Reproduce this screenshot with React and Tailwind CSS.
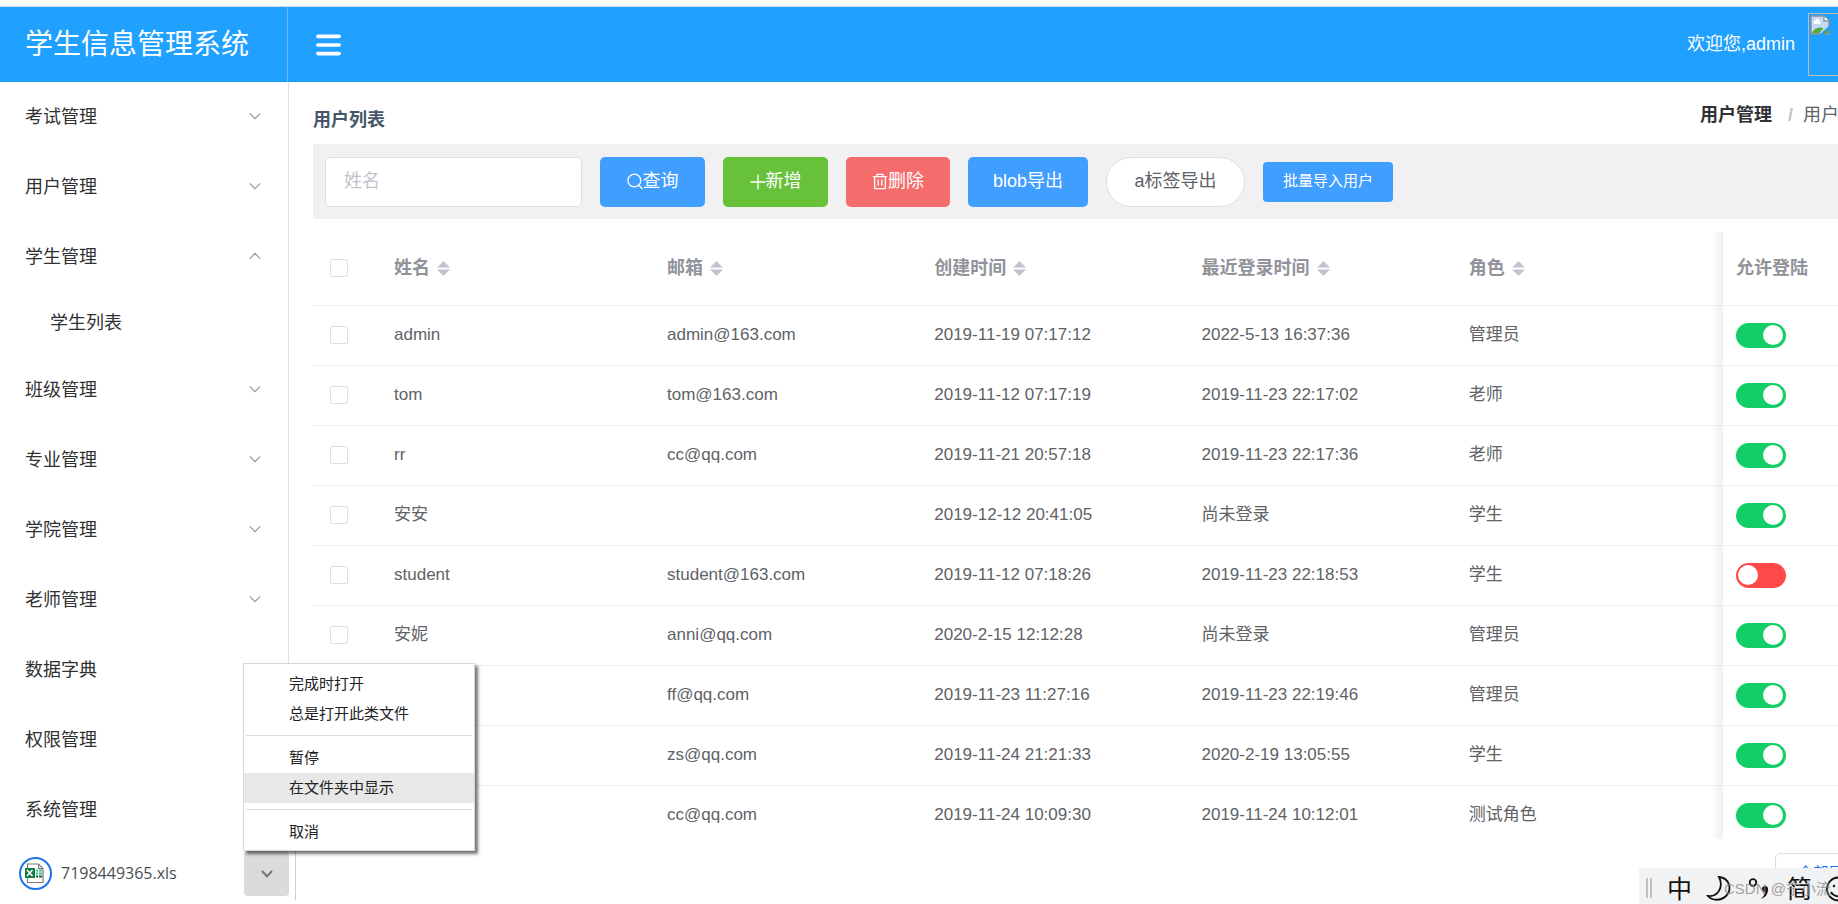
import React from "react";

const MENU = [
  { label: "考试管理", arrow: "down" },
  { label: "用户管理", arrow: "down" },
  { label: "学生管理", arrow: "up", children: ["学生列表"] },
  { label: "班级管理", arrow: "down" },
  { label: "专业管理", arrow: "down" },
  { label: "学院管理", arrow: "down" },
  { label: "老师管理", arrow: "down" },
  { label: "数据字典" },
  { label: "权限管理" },
  { label: "系统管理" },
];

const ROWS = [
  ["admin", "admin@163.com", "2019-11-19 07:17:12", "2022-5-13 16:37:36", "管理员", true],
  ["tom", "tom@163.com", "2019-11-12 07:17:19", "2019-11-23 22:17:02", "老师", true],
  ["rr", "cc@qq.com", "2019-11-21 20:57:18", "2019-11-23 22:17:36", "老师", true],
  ["安安", "", "2019-12-12 20:41:05", "尚未登录", "学生", true],
  ["student", "student@163.com", "2019-11-12 07:18:26", "2019-11-23 22:18:53", "学生", false],
  ["安妮", "anni@qq.com", "2020-2-15 12:12:28", "尚未登录", "管理员", true],
  ["ff", "ff@qq.com", "2019-11-23 11:27:16", "2019-11-23 22:19:46", "管理员", true],
  ["zs", "zs@qq.com", "2019-11-24 21:21:33", "2020-2-19 13:05:55", "学生", true],
  ["cc", "cc@qq.com", "2019-11-24 10:09:30", "2019-11-24 10:12:01", "测试角色", true],
];

const COLUMNS = ["姓名", "邮箱", "创建时间", "最近登录时间", "角色"];

function Chevron({ up }) {
  return (
    <svg width="12" height="10" viewBox="0 0 12 10" fill="none" stroke="#909399" strokeWidth="1.1" className="shrink-0">
      <path d={up ? "M0.8 6.6 L6 1.4 L11.2 6.6" : "M0.8 1.4 L6 6.6 L11.2 1.4"} />
    </svg>
  );
}

function Header() {
  return (
    <header className="flex h-[76px] shrink-0 items-stretch border-t border-[#d5dbe0] bg-[#20a0ff] text-white">
      <h1 className="flex w-[288px] shrink-0 items-center border-r border-[#5fb9fb] pl-[25px] text-[28px]">学生信息管理系统</h1>
      <button type="button" aria-label="菜单" className="ml-[28px]">
        <svg width="25" height="22" viewBox="0 0 25 22" fill="none" stroke="#fff" strokeWidth="3.6" strokeLinecap="round">
          <path d="M1.9 2.4H23.1M1.9 11H23.1M1.9 19.6H23.1" />
        </svg>
      </button>
      <div className="ml-auto mr-[30px] flex items-center gap-[13px]">
        <span className="text-[18px]">欢迎您,admin</span>
        <span className="h-[63px] w-[62px] border border-[#b9bec2] p-px">
          <svg width="20" height="20" viewBox="0 0 20 20">
            <path d="M1 1H14L19 6V19H1Z" fill="#c6d8f3" stroke="#8d9299" strokeWidth="1.4" />
            <path d="M4 9a2 2 0 0 1 1-3.4A2.4 2.4 0 0 1 9.6 6 1.8 1.8 0 0 1 10 9Z" fill="#fff" />
            <path d="M1.7 18.3C4.5 13 8.5 11 13.5 13.5L9 18.3Z" fill="#52a838" />
            <path d="M14 1V6H19" fill="#fff" stroke="#8d9299" strokeWidth="1.4" />
            <path d="M20 10V14L14 19.8H9Z" fill="#20a0ff" />
            <path d="M13 18.6L18.6 14V18.6Z" fill="#52a838" />
          </svg>
        </span>
      </div>
    </header>
  );
}

function Sidebar() {
  return (
    <aside className="w-[289px] shrink-0 border-r border-[#e0e0e3]">
      <nav>
        <ul>
          {MENU.map((item) => (
            <li key={item.label}>
              <a href="#" className="flex h-[70px] items-center justify-between pl-[25px] pr-[27px] text-[18px] text-[#303133]">
                {item.label}
                {item.arrow && <Chevron up={item.arrow === "up"} />}
              </a>
              {item.children && (
                <ul>
                  {item.children.map((c) => (
                    <li key={c}>
                      <a href="#" className="flex h-[63px] items-center pl-[50px] text-[18px] text-[#303133]">{c}</a>
                    </li>
                  ))}
                </ul>
              )}
            </li>
          ))}
        </ul>
      </nav>
    </aside>
  );
}

function Toolbar() {
  return (
    <div className="flex h-[75px] items-center gap-[18px] bg-[#f1f1f1] pl-3">
      <input
        type="text"
        aria-label="姓名"
        placeholder="姓名"
        className="h-[50px] w-[257px] rounded-[5px] border border-[#dcdfe6] bg-white px-[18px] text-[18px] placeholder:text-[#c0c4cc]"
      />
      <button type="button" className="flex h-[50px] w-[105px] items-center justify-center rounded-[5px] bg-[#409eff] text-[18px] text-white">
        <svg width="16" height="17" viewBox="0 0 17 18" fill="none" stroke="currentColor" strokeWidth="1.4">
          <circle cx="7.8" cy="8" r="6.8" />
          <path d="M12.4 12.8L16.4 17" />
        </svg>
        查询
      </button>
      <button type="button" className="flex h-[50px] w-[105px] items-center justify-center rounded-[5px] bg-[#67c23a] text-[18px] text-white">
        <svg width="16" height="16" viewBox="0 0 16 16" fill="none" stroke="currentColor" strokeWidth="1.3">
          <path d="M8 0.5V15.5M0.5 8H15.5" />
        </svg>
        新增
      </button>
      <button type="button" className="flex h-[50px] w-[104px] items-center justify-center rounded-[5px] bg-[#f56c6c] text-[18px] text-white">
        <svg width="16" height="17" viewBox="0 0 17 18" fill="none" stroke="currentColor" strokeWidth="1.4">
          <path d="M0.8 3.8H16.2M5.4 3.6V1.4H11.6V3.6M2.8 4V16.6H14.2V4M6.6 7V13.4M10.4 7V13.4" />
        </svg>
        删除
      </button>
      <button type="button" className="h-[50px] w-[120px] rounded-[5px] bg-[#409eff] text-[18px] text-white">blob导出</button>
      <a href="#" className="flex h-[50px] w-[139px] items-center justify-center rounded-full border border-[#dcdfe6] bg-white text-[18px] text-[#606266]">a标签导出</a>
      <button type="button" className="h-[40px] w-[130px] rounded-[4px] bg-[#409eff] text-[15px] text-white">批量导入用户</button>
    </div>
  );
}

function Check({ label }) {
  return (
    <input
      type="checkbox"
      aria-label={label}
      className="block size-[18px] appearance-none rounded-[2px] border border-[#dcdfe6] bg-white"
    />
  );
}

function Switch({ on, label }) {
  return (
    <button
      type="button"
      role="switch"
      aria-checked={on}
      aria-label={label}
      className={
        on
          ? "flex h-[25px] w-[50px] items-center justify-end rounded-full bg-[#13ce66] px-[3px]"
          : "flex h-[25px] w-[50px] items-center justify-start rounded-full bg-[#ff4949] px-[2px]"
      }
    >
      <span className="size-[20px] rounded-full bg-white" />
    </button>
  );
}

const FIXED_CELL =
  "relative pl-[13px] before:absolute before:inset-y-0 before:right-full before:w-3 before:bg-linear-to-l before:from-black/6 before:to-transparent";

function UserTable() {
  return (
    <table className="mt-[13px] w-full table-fixed border-collapse text-left">
      <colgroup>
        <col className="w-[68px]" />
        <col className="w-[273px]" />
        <col />
        <col />
        <col />
        <col />
        <col className="w-[152px]" />
      </colgroup>
      <thead>
        <tr className="h-[73px] border-b border-[#ebeef5] text-[18px] text-[#909399]">
          <th className="pl-[17px]"><Check label="全选" /></th>
          {COLUMNS.map((c) => (
            <th key={c} className="pl-[13px] font-bold">
              <span className="flex items-center gap-[7px]">
                {c}
                <svg width="13" height="15" viewBox="0 0 12 14" fill="#c0c4cc">
                  <path d="M0 6L6 0L12 6ZM0 8L6 14L12 8Z" />
                </svg>
              </span>
            </th>
          ))}
          <th className={FIXED_CELL}>允许登陆</th>
        </tr>
      </thead>
      <tbody>
        {ROWS.map(([name, email, created, last, role, on]) => (
          <tr key={name} className="h-[60px] border-b border-[#ebeef5] text-[17px] text-[#606266]">
            <td className="pl-[17px]"><Check label={name} /></td>
            {[name, email, created, last, role].map((v, i) => (
              <td key={i} className="pl-[13px]">{v}</td>
            ))}
            <td className={FIXED_CELL}><Switch on={on} label={name} /></td>
          </tr>
        ))}
      </tbody>
    </table>
  );
}

function ContextMenu() {
  const item = "block h-[30px] w-full pl-[45px] text-left text-[15px] text-[#202124]";
  return (
    <div role="menu" className="absolute bottom-[53px] left-[243px] z-30 w-[232px] border border-[#d6d8da] bg-white pt-[5px] pb-[3px] shadow-[3px_3px_3px_rgba(0,0,0,0.55)]">
      <button type="button" role="menuitem" className={item}>完成时打开</button>
      <button type="button" role="menuitem" className={item}>总是打开此类文件</button>
      <hr className="mx-[2px] mt-[6px] mb-[7px] border-[#dadcdd]" />
      <button type="button" role="menuitem" className={item}>暂停</button>
      <button type="button" role="menuitem" className="block h-[30px] w-full bg-[#e8e8e8] pl-[45px] text-left text-[15px] text-[#202124]">在文件夹中显示</button>
      <hr className="mx-[2px] mt-[6px] mb-[7px] border-[#dadcdd]" />
      <button type="button" role="menuitem" className={item}>取消</button>
    </div>
  );
}

function DownloadShelf() {
  return (
    <footer className="relative z-20 flex h-[65px] shrink-0 items-start bg-white pt-3">
      <div className="flex h-[45px] w-[244px] items-center gap-[9px] pl-[19px]">
        <svg width="33" height="33" viewBox="0 0 33 33">
          <circle cx="16.5" cy="16.5" r="15.5" fill="#fff" stroke="#1a73e8" strokeWidth="2" />
          <path d="M8.5 7H19.5L24 11.5V25.5H8.5Z" fill="#fff" stroke="#7c7c7c" strokeWidth="1.2" />
          <path d="M19.5 7V11.5H24" fill="none" stroke="#7c7c7c" strokeWidth="1.2" />
          <path d="M6 11H16V21H6Z" fill="#107c41" />
          <path d="M8 13L13.5 19M13.5 13L8 19" stroke="#fff" strokeWidth="1.6" />
          <path d="M17 13.5H19M20 13.5H23M17 16.5H19M20 16.5H23" stroke="#33c481" strokeWidth="2" />
          <path d="M17 19.5H19M20 19.5H23" stroke="#185c37" strokeWidth="2" />
        </svg>
        <span className="pb-px font-['Open_Sans',sans-serif] text-[16px] text-[#4a4d51]">7198449365.xls</span>
      </div>
      <button type="button" aria-label="下载选项" className="flex size-[45px] items-center justify-center rounded-[4px] bg-[#dadcdb]">
        <svg width="12" height="8" viewBox="0 0 12 8" fill="none" stroke="#6f7376" strokeWidth="2">
          <path d="M1 1L6 6.4L11 1" />
        </svg>
      </button>
      <span className="ml-[6px] h-[49px] w-px bg-[#cccecf]" />
      <button type="button" className="-mr-[43px] ml-auto mt-[2px] h-[40px] w-[106px] rounded-[5px] border border-[#dadce0] text-[15px] text-[#1a73e8]">全部显示</button>
    </footer>
  );
}

function ImeBar() {
  return (
    <div className="absolute bottom-0 right-0 z-40 h-[36px] w-[199px] overflow-hidden bg-[#f1f2f3]">
      <svg width="199" height="36" viewBox="0 0 199 36" fill="none" stroke="#111" strokeWidth="1.8">
        <path d="M8 10V30M12 10V30" stroke="#b5b5b5" strokeWidth="1.6" />
        <path d="M80 9C90 10 94 21 87 28C82 33 73 33 69 28C79 29 85 19 80 9Z" />
        <circle cx="114" cy="14.5" r="3.3" />
        <path d="M123 21A3 3 0 1 1 129 21C129 26 127 29 122 31C125 28 126 26 125.5 24A3 3 0 0 1 123 21Z" fill="#111" stroke="none" />
        <circle cx="199.5" cy="21" r="11.5" />
        <circle cx="195" cy="18" r="1.2" fill="#111" stroke="none" />
        <path d="M192 24C194 27.5 197 28.5 201 28.5" />
      </svg>
      <span className="absolute left-[28px] top-[2px] text-[25px] leading-[38px] text-[#111]">中</span>
      <span className="absolute left-[148px] top-[2px] text-[25px] leading-[38px] text-[#111]">简</span>
      <span className="absolute left-[85px] top-[11px] whitespace-nowrap text-[15px] leading-[20px] text-[#8a8a8a]/80">CSDN @宁小流</span>
    </div>
  );
}

export default function App() {
  return (
    <div className="relative flex h-screen flex-col overflow-hidden bg-white pt-[6px] font-['Liberation_Sans','Noto_Sans_CJK_SC',sans-serif]">
      <div className="flex min-h-0 w-[calc(100%+62px)] flex-1 flex-col overflow-hidden">
        <Header />
        <div className="flex min-h-0 flex-1 overflow-hidden">
          <Sidebar />
          <main className="min-w-0 flex-1 pl-6 pr-[25px]">
            <div className="flex h-[62px] justify-between text-[18px] leading-[28px]">
              <h2 className="pt-[24px] font-bold text-[#475669]">用户列表</h2>
              <nav className="flex pt-[19px]">
                <a href="#" className="font-bold text-[#303133]">用户管理</a>
                <span className="ml-[16px] mr-[10px] font-bold text-[#c0c4cc]">/</span>
                <span className="text-[#606266]">用户列表</span>
              </nav>
            </div>
            <Toolbar />
            <UserTable />
          </main>
        </div>
      </div>
      <DownloadShelf />
      <ContextMenu />
      <ImeBar />
    </div>
  );
}
